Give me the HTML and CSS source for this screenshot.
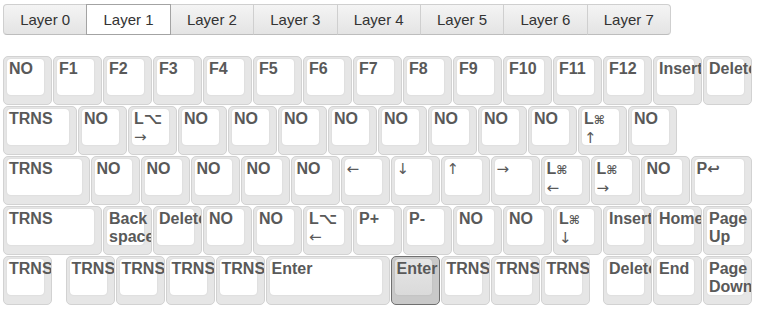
FILE: index.html
```html
<!DOCTYPE html>
<html lang="en">
<head>
    <meta charset="UTF-8">
    <title>Keymap Editor</title>
    <link rel="stylesheet" href="styles.css">
</head>
<body>
    <div class="layers">
        <div class="layer">Layer 0</div>
        <div class="layer active">Layer 1</div>
        <div class="layer">Layer 2</div>
        <div class="layer">Layer 3</div>
        <div class="layer">Layer 4</div>
        <div class="layer">Layer 5</div>
        <div class="layer">Layer 6</div>
        <div class="layer">Layer 7</div>
    </div>

    <div class="keyboard">
        <div class="row">
            <div class="key"><div class="top">NO</div></div>
            <div class="key"><div class="top">F1</div></div>
            <div class="key"><div class="top">F2</div></div>
            <div class="key"><div class="top">F3</div></div>
            <div class="key"><div class="top">F4</div></div>
            <div class="key"><div class="top">F5</div></div>
            <div class="key"><div class="top">F6</div></div>
            <div class="key"><div class="top">F7</div></div>
            <div class="key"><div class="top">F8</div></div>
            <div class="key"><div class="top">F9</div></div>
            <div class="key"><div class="top">F10</div></div>
            <div class="key"><div class="top">F11</div></div>
            <div class="key"><div class="top">F12</div></div>
            <div class="key"><div class="top">Insert</div></div>
            <div class="key"><div class="top">Delete</div></div>
        </div>
        <div class="row">
            <div class="key w150"><div class="top">TRNS</div></div>
            <div class="key"><div class="top">NO</div></div>
            <div class="key"><div class="top">L⌥<br><span class="arrow">→</span></div></div>
            <div class="key"><div class="top">NO</div></div>
            <div class="key"><div class="top">NO</div></div>
            <div class="key"><div class="top">NO</div></div>
            <div class="key"><div class="top">NO</div></div>
            <div class="key"><div class="top">NO</div></div>
            <div class="key"><div class="top">NO</div></div>
            <div class="key"><div class="top">NO</div></div>
            <div class="key"><div class="top">NO</div></div>
            <div class="key"><div class="top">L<span class="cmd">⌘</span><br><span class="arrow">↑</span></div></div>
            <div class="key"><div class="top">NO</div></div>
        </div>
        <div class="row">
            <div class="key w175"><div class="top">TRNS</div></div>
            <div class="key"><div class="top">NO</div></div>
            <div class="key"><div class="top">NO</div></div>
            <div class="key"><div class="top">NO</div></div>
            <div class="key"><div class="top">NO</div></div>
            <div class="key"><div class="top">NO</div></div>
            <div class="key"><div class="top"><span class="arrow">←</span></div></div>
            <div class="key"><div class="top"><span class="arrow">↓</span></div></div>
            <div class="key"><div class="top"><span class="arrow">↑</span></div></div>
            <div class="key"><div class="top"><span class="arrow">→</span></div></div>
            <div class="key"><div class="top">L<span class="cmd">⌘</span><br><span class="arrow">←</span></div></div>
            <div class="key"><div class="top">L<span class="cmd">⌘</span><br><span class="arrow">→</span></div></div>
            <div class="key"><div class="top">NO</div></div>
            <div class="key w125"><div class="top">P<span class="ret">↩</span></div></div>
        </div>
        <div class="row">
            <div class="key w200"><div class="top">TRNS</div></div>
            <div class="key"><div class="top">Back<br>space</div></div>
            <div class="key"><div class="top">Delete</div></div>
            <div class="key"><div class="top">NO</div></div>
            <div class="key"><div class="top">NO</div></div>
            <div class="key"><div class="top">L⌥<br><span class="arrow">←</span></div></div>
            <div class="key"><div class="top">P+</div></div>
            <div class="key"><div class="top">P-</div></div>
            <div class="key"><div class="top">NO</div></div>
            <div class="key"><div class="top">NO</div></div>
            <div class="key"><div class="top">L<span class="cmd">⌘</span><br><span class="arrow">↓</span></div></div>
            <div class="key"><div class="top">Insert</div></div>
            <div class="key"><div class="top">Home</div></div>
            <div class="key"><div class="top">Page<br>Up</div></div>
        </div>
        <div class="row">
            <div class="key"><div class="top">TRNS</div></div>
            <div class="spacer"></div>
            <div class="key"><div class="top">TRNS</div></div>
            <div class="key"><div class="top">TRNS</div></div>
            <div class="key"><div class="top">TRNS</div></div>
            <div class="key"><div class="top">TRNS</div></div>
            <div class="key w250"><div class="top">Enter</div></div>
            <div class="key pressed"><div class="top">Enter</div></div>
            <div class="key"><div class="top">TRNS</div></div>
            <div class="key"><div class="top">TRNS</div></div>
            <div class="key"><div class="top">TRNS</div></div>
            <div class="spacer"></div>
            <div class="key"><div class="top">Delete</div></div>
            <div class="key"><div class="top">End</div></div>
            <div class="key"><div class="top">Page<br>Down</div></div>
        </div>
    </div>
</body>
</html>
```

FILE: styles.css
```css
body {
    margin: 0;
    padding: 4px 3px;
    font-family: "Liberation Sans", Arial, "DejaVu Sans", sans-serif;
    background: #fff;
}
.layers {
    display: flex;
}
.layer {
    box-sizing: border-box;
    width: 84.375px;
    height: 31px;
    margin-left: -1px;
    border: 1px solid #cfcfcf;
    border-bottom-color: #bdbdbd;
    background: linear-gradient(#f4f4f4, #e4e4e4);
    color: #333;
    font-size: 15px;
    display: flex;
    align-items: center;
    justify-content: center;
}
.layer:first-child {
    margin-left: 0;
    border-radius: 4px 0 0 4px;
}
.layer:last-child {
    border-radius: 0 4px 4px 0;
}
.layer.active {
    background: #fff;
    border-color: #a3a3a3;
    position: relative;
    z-index: 1;
}
.keyboard {
    margin-top: 21px;
}
.row {
    display: flex;
    height: 50px;
}
.key {
    box-sizing: border-box;
    width: 49px;
    height: 49px;
    margin-right: 1px;
    border: 1px solid #d2d2d2;
    border-radius: 5px;
    background: #e6e6e6;
    padding: 2px 7px 9px 3px;
    display: flex;
    overflow: hidden;
}
.w125 { width: 61.5px; }
.w150 { width: 74px; }
.w175 { width: 86.5px; }
.w200 { width: 99px; }
.w250 { width: 124px; }
.spacer {
    width: 12.5px;
}
.top {
    flex: 1;
    min-width: 0;
    background: #fff;
    border-radius: 4px;
    box-shadow: 0 0 2px rgba(0, 0, 0, 0.1);
    padding: 1px 0 0 2px;
    font-size: 16px;
    font-weight: bold;
    line-height: 18px;
    color: #595959;
    white-space: nowrap;
}
.arrow,
.ret {
    font-family: "DejaVu Sans", sans-serif;
    font-weight: normal;
    font-size: 15px;
}
.ret {
    font-weight: bold;
}
.cmd {
    font-size: 12px;
}
.key.pressed {
    border-color: #707070;
    background: #c9c9c9;
}
.key.pressed .top {
    background: linear-gradient(#e6e6e6, #dadada);
}
```
